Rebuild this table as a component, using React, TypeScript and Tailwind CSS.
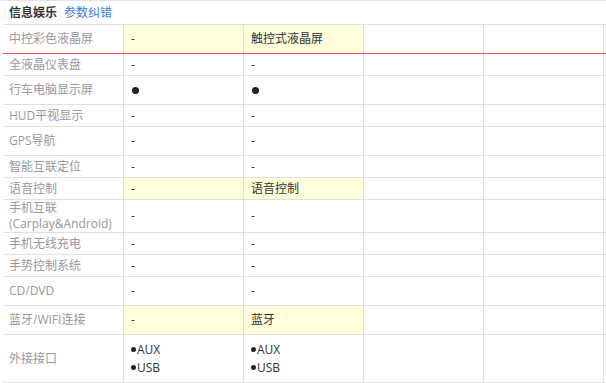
import React from 'react'

type Row = {
  label: React.ReactNode
  a: React.ReactNode
  b: React.ReactNode
  h: string
  hl?: boolean
  red?: boolean
}

const dot = <span className="inline-block w-[7px] h-[7px] rounded-full bg-[#222] ml-[1px]" />

const Ports = () => (
  <div className="leading-[18px]">
    <div className="flex items-center">
      <span className="inline-block w-[5px] h-[5px] rounded-full bg-[#222] mr-[1px]" />
      AUX
    </div>
    <div className="flex items-center">
      <span className="inline-block w-[5px] h-[5px] rounded-full bg-[#222] mr-[1px]" />
      USB
    </div>
  </div>
)

const rows: Row[] = [
  { label: '中控彩色液晶屏', a: '-', b: '触控式液晶屏', h: 'h-[28px]', hl: true, red: true },
  { label: '全液晶仪表盘', a: '-', b: '-', h: 'h-[21px]' },
  { label: '行车电脑显示屏', a: dot, b: dot, h: 'h-[28px]' },
  { label: 'HUD平视显示', a: '-', b: '-', h: 'h-[21px]' },
  { label: 'GPS导航', a: '-', b: '-', h: 'h-[28px]' },
  { label: '智能互联定位', a: '-', b: '-', h: 'h-[21px]' },
  { label: '语音控制', a: '-', b: '语音控制', h: 'h-[21px]', hl: true },
  {
    label: (
      <div className="leading-[16px]">
        <div>手机互联</div>
        <div>(Carplay&amp;Android)</div>
      </div>
    ),
    a: '-',
    b: '-',
    h: 'h-[32px]',
  },
  { label: '手机无线充电', a: '-', b: '-', h: 'h-[21px]' },
  { label: '手势控制系统', a: '-', b: '-', h: 'h-[21px]' },
  { label: 'CD/DVD', a: '-', b: '-', h: 'h-[28px]' },
  { label: '蓝牙/WIFI连接', a: '-', b: '蓝牙', h: 'h-[28px]', hl: true },
  { label: '外接接口', a: <Ports />, b: <Ports />, h: 'h-[47px]' },
]

export default function App() {
  return (
    <div
      className="w-[606px] h-[383px] overflow-hidden bg-white border-t border-[#e3e3e3] text-[12px]"
      style={{ fontFamily: '"Open Sans", "Noto Sans CJK SC", sans-serif' }}
    >
      <div className="h-[23px] flex items-center gap-[7px] pl-[9px]">
        <span className="font-bold text-[#333]">信息娱乐</span>
        <span className="text-[#3b7ddb]">参数纠错</span>
      </div>
      <div className="ml-[3px] border-t border-[#e0e0e0]">
        {rows.map((r, i) => (
          <div
            key={i}
            className={`flex border-b ${r.red ? 'border-[#e5545a]' : 'border-[#e0e0e0]'}`}
          >
            <div className={`w-[121px] shrink-0 ${r.h} flex items-center pl-[6px] border-r border-[#e0e0e0] text-[#999]`}>
              {r.label}
            </div>
            <div
              className={`w-[120px] shrink-0 flex items-center pl-[7px] border-r border-[#e0e0e0] text-[#333] ${r.hl ? 'bg-[#ffffdc]' : ''}`}
            >
              {r.a}
            </div>
            <div
              className={`w-[120px] shrink-0 flex items-center pl-[7px] border-r border-[#e0e0e0] text-[#333] ${r.hl ? 'bg-[#ffffdc]' : ''}`}
            >
              {r.b}
            </div>
            <div className="w-[120px] shrink-0 border-r border-[#e0e0e0]" />
            <div className="w-[120px] shrink-0 border-r border-[#e0e0e0]" />
            <div className="flex-1" />
          </div>
        ))}
      </div>
    </div>
  )
}
